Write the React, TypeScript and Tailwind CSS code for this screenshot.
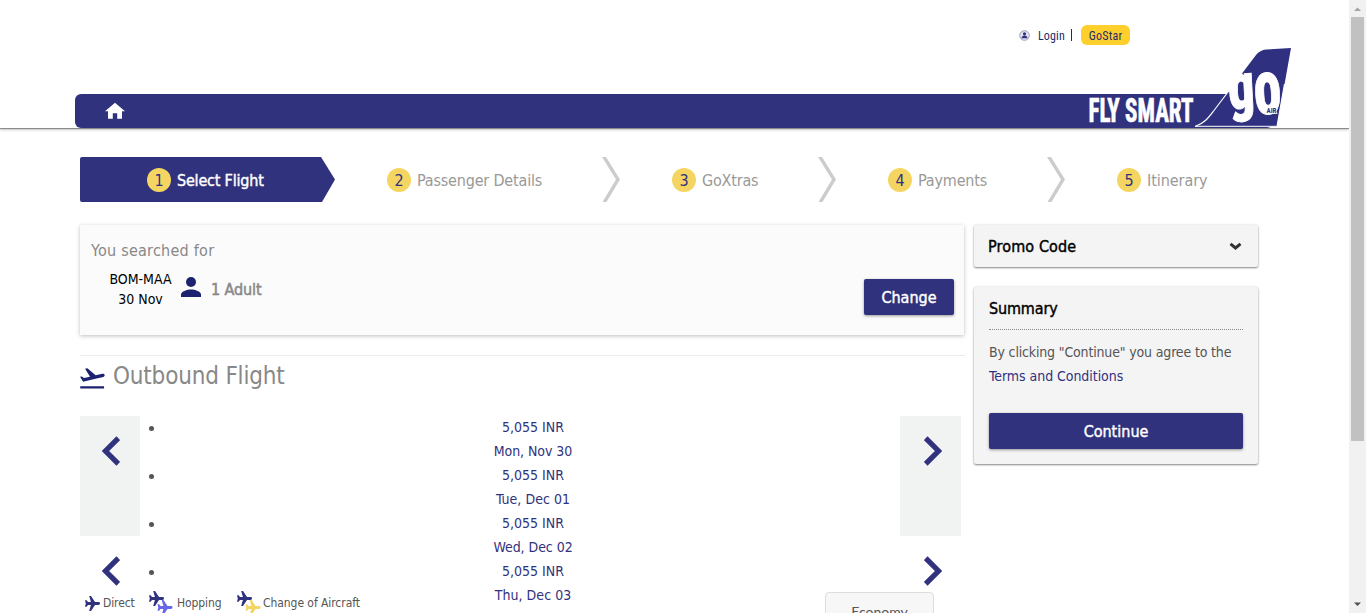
import React from "react";

const steps = [
  { label: "Passenger Details", width: "w-[285px]", track: "-tracking-[0.18px]" },
  { label: "GoXtras", width: "w-[216px]", track: "-tracking-[0.2px]" },
  { label: "Payments", width: "w-[229px]", track: "-tracking-[0.17px]" },
  { label: "Itinerary", width: "w-[150px]", track: "-tracking-[0.05px]" },
];

const fares = ["Mon, Nov 30", "Tue, Dec 01", "Wed, Dec 02", "Thu, Dec 03"];

const PLANE =
  "M15 7.500c0-.9-.7-1.400-1.500-1.400H10L6 0H4.200l1.700 6.100H3L1.600 4.200H0l.8 3.300L0 10.800h1.600L3 8.900h2.900L4.200 15H6l4-6.100h3.500c.8 0 1.500-.5 1.500-1.400z";

function Circle({ n }: { n: number }) {
  return (
    <span className="flex h-6 w-6 shrink-0 items-center justify-center rounded-full bg-[#f5d562] pt-0.5 text-[16px] leading-none text-[#31327d]">
      {n}
    </span>
  );
}

function Stepper() {
  return (
    <div className="flex h-[45px] w-[1178px]">
      <div className="flex w-[255px] items-center rounded-l-[2px] bg-[#31327d] pl-[67px] text-white [clip-path:polygon(0_0,241px_0,100%_50%,242px_100%,0_100%)]">
        <Circle n={1} />
        <span className="ml-1.5 pt-0.5 text-[16px] -tracking-[0.2px] [-webkit-text-stroke:0.4px_white]">Select Flight</span>
      </div>
      {steps.map((s, i) => (
        <div key={s.label} className={`flex shrink-0 items-center pl-[52px] ${s.width}`}>
          <Circle n={i + 2} />
          <span className={`ml-1.5 pt-0.5 text-[16px] text-[#999] ${s.track}`}>{s.label}</span>
          {i < 3 && (
            <svg className="ml-auto" width="18" height="45" viewBox="0 0 18 45">
              <path d="M0 0H4L18 22.5L4.500 45H.5L14 22.500z" fill="#ccc" />
            </svg>
          )}
        </div>
      ))}
    </div>
  );
}

function Logo() {
  return (
    <svg className="block" width="210" height="82" viewBox="1085 47 210 82">
      <g fontFamily="Roboto, 'Liberation Sans Narrow', sans-serif" fontWeight="700" style={{ fontStretch: "75%" }}>
        <text
          x="1088.500"
          y="122"
          fontSize="33"
          fill="#fff"
          stroke="#fff"
          strokeWidth=".7"
          textLength="105"
          lengthAdjust="spacingAndGlyphs"
        >
          FLY SMART
        </text>
        <path d="M1195 126.500C1205 123 1209 117 1214 110.500L1256 55Q1260 50 1266 49.500L1291 48L1277 126.500z" fill="#2f307f" />
        <path d="M1195 126.500C1205 123 1209 117 1214 110.500L1242 73.500M1284.500 84L1277 126.500" fill="none" stroke="#fff" strokeWidth="1.200" />
        <path d="M1195 126.300H1277" stroke="#fff" strokeWidth="1" />
        <g fill="#fff" stroke="#fff" strokeWidth="1" fontWeight="800">
          <text fontSize="64" transform="translate(1229 109) rotate(-3) scale(.82 1.020)">g</text>
          <text fontSize="80" transform="translate(1255 114.500) rotate(-3) scale(.69 .96)">o</text>
        </g>
        <text x="1266.500" y="112.500" fontSize="7" fill="#2f307f" stroke="#fff" strokeWidth="1.500" paintOrder="stroke" textLength="10" lengthAdjust="spacingAndGlyphs">
          AIR
        </text>
      </g>
    </svg>
  );
}

function Header() {
  return (
    <header className="relative h-32 w-[1349px] bg-white shadow-[0_1px_1px_rgba(0,0,0,0.36),0_2px_3px_rgba(0,0,0,0.18)]">
      <div className="flex h-[94px] items-start pl-[1019px] pt-[25px] font-['Roboto','Liberation_Sans_Narrow',sans-serif] text-[12px] text-[#1d2c6b] [font-stretch:75%]">
        <div className="flex h-5 items-center">
          <svg width="11" height="11" viewBox="0 0 11 11">
            <circle cx="5.500" cy="5.500" r="4.800" fill="#e4e4f2" stroke="#9899c4" />
            <circle cx="5.500" cy="3.800" r="1.600" fill="#31327d" />
            <path d="M2.500 8.200Q2.800 5.600 5.500 5.600T8.500 8.200z" fill="#31327d" />
          </svg>
          <span className="ml-[8px] w-[27px] whitespace-nowrap pt-px tracking-[0.15px]">Login</span>
          <span className="ml-[6px] h-[12px] w-px bg-[#1d2c6b]" />
          <span className="ml-[9px] flex h-5 w-[49px] items-center justify-center rounded-[6px] bg-[#ffcf2e] pt-px tracking-[0.2px]">
            GoStar
          </span>
        </div>
      </div>
      <div className="ml-[75px] flex h-[34px] w-[1198px] items-center rounded-[6px] bg-[#31327d] pl-[28px]">
        <svg className="block" width="24" height="22" viewBox="0 0 24 24" preserveAspectRatio="none" fill="#fff">
          <path d="M9.800 20.500v-6h4.400v6H19v-8.300h3L12 3 2 12.200h3v8.300z" />
        </svg>
      </div>
      <div className="absolute left-[1085px] top-[47px]">
        <Logo />
      </div>
    </header>
  );
}

function Chevron({ flip }: { flip?: boolean }) {
  return (
    <svg className={flip ? "-scale-x-100" : ""} width="18" height="30" viewBox="0 0 18 30">
      <path d="M16.300 2.200L3.500 15L16.300 27.800" fill="none" stroke="#31327d" strokeWidth="5.200" />
    </svg>
  );
}

function Arrows({ flip }: { flip?: boolean }) {
  return (
    <div className={flip ? "w-[61px]" : "w-[60px]"}>
      <div className={`h-[120px] bg-[#f1f3f3] pt-5 ${flip ? "pl-6" : "pl-[22px]"}`}>
        <Chevron flip={flip} />
      </div>
      <div className={`pt-5 ${flip ? "pl-6" : "pl-[22px]"}`}>
        <Chevron flip={flip} />
      </div>
    </div>
  );
}

function TwoPlanes({ second }: { second: string }) {
  return (
    <svg width="24" height="23" viewBox="0 0 24 23">
      <path d={PLANE} fill="#31327d" />
      <path d={PLANE} fill={second} transform="translate(8.500 9)" />
    </svg>
  );
}

function FlightList() {
  return (
    <section className="mt-[25px] flex h-[197px] w-[885px] overflow-hidden">
      <div className="flex w-[60px] shrink-0 flex-col">
        <Arrows />
      </div>
      <ul className="-mt-px w-[760px] pl-[9px] text-center text-[14px] leading-6 text-[#31327d]">
        {fares.map((d, i) => (
          <li key={d} className="flex items-start">
            <span className="mt-[11px] h-[5px] w-[5px] rounded-full bg-[#555]" />
            <div className="flex-1 pl-3">
              <p>5,055 INR</p>
              <p className={i % 2 ? "tracking-[0.05px]" : "-tracking-[0.05px]"}>{d}</p>
            </div>
          </li>
        ))}
      </ul>
      <Arrows flip />
    </section>
  );
}

function Legend() {
  return (
    <div className="absolute left-[85px] top-[590px] flex h-[25px] items-center text-[12px] text-[#555]">
      <svg className="mt-[2px]" width="15" height="15" viewBox="0 0 15 15">
        <path d={PLANE} fill="#31327d" />
      </svg>
      <span className="ml-[3px] w-[46px] -tracking-[0.1px]">Direct</span>
      <TwoPlanes second="#6668e8" />
      <span className="ml-[4px] w-[60px] -tracking-[0.1px]">Hopping</span>
      <TwoPlanes second="#f5d562" />
      <span className="ml-[2px] whitespace-nowrap -tracking-[0.06px]">Change of Aircraft</span>
    </div>
  );
}

function Sidebar() {
  const card = "rounded-[2px] bg-[#f4f4f4] shadow-[0_1px_2px_rgba(0,0,0,0.45),0_0_3px_rgba(0,0,0,0.1)]";
  return (
    <aside className="ml-[9px] w-[284px]">
      <div className={`flex h-[42px] items-center pl-[14px] pr-[16px] ${card}`}>
        <span className="pt-0.5 text-[16px] tracking-[0.12px] text-black [-webkit-text-stroke:0.4px_black]">Promo Code</span>
        <svg className="ml-auto" width="13" height="9" viewBox="0 0 13 9">
          <path d="M1.500 1.800L6.500 6L11.500 1.800" fill="none" stroke="#333" strokeWidth="3" />
        </svg>
      </div>
      <div className={`mt-5 h-[177px] px-[15px] ${card}`}>
        <h2 className="h-[43px] border-b border-dotted border-[#888] pt-[10px] text-[16px] leading-6 text-black -tracking-[0.15px] [-webkit-text-stroke:0.4px_black]">
          Summary
        </h2>
        <p className="whitespace-nowrap pt-[10px] text-[14px] leading-6 -tracking-[0.16px] text-[#555]">
          By clicking "Continue" you agree to the
        </p>
        <p className="text-[14px] leading-6 -tracking-[0.05px] text-[#31327d]">Terms and Conditions</p>
        <button className="mt-[25px] block h-9 w-full rounded-[2px] bg-[#31327d] pt-0.5 text-[16px] text-white shadow-[0_1px_3px_rgba(0,0,0,0.4)] [-webkit-text-stroke:0.4px_white]">
          Continue
        </button>
      </div>
    </aside>
  );
}

function Scrollbar() {
  return (
    <div className="flex w-[17px] shrink-0 flex-col items-center bg-[#f1f1f1]">
      <svg className="shrink-0" width="17" height="17" viewBox="0 0 17 17">
        <path d="M5 11L8.500 7.500L12 11z" fill="#a3a3a3" />
      </svg>
      <div className="h-[424px] w-[13px] shrink-0 bg-[#c1c1c1]" />
      <svg className="mt-auto shrink-0" width="17" height="17" viewBox="0 0 17 17">
        <path d="M5 6.500L8.500 10L12 6.500z" fill="#505050" />
      </svg>
    </div>
  );
}

export default function App() {
  return (
    <div className="relative flex h-[613px] w-[1366px] overflow-hidden bg-white font-['DejaVu_Sans_Condensed','DejaVu_Sans',sans-serif]">
      <div className="w-[1349px] shrink-0 overflow-hidden">
        <Header />
        <main className="pl-20 pt-[29px]">
          <Stepper />
          <div className="mt-[23px] flex">
            <div className="w-[885px]">
              <section className="flex h-[110px] w-[884px] justify-between bg-[#fbfbfb] pl-[11px] pr-[10px] shadow-[0_1px_4px_rgba(0,0,0,0.26)]">
                <div>
                  <h2 className="pt-[14px] text-[16px] leading-6 tracking-[0.25px] text-[#888]">You searched for</h2>
                  <div className="mt-[6px] flex pl-[18px]">
                    <div className="w-[63px] whitespace-nowrap text-center text-[14px] leading-5 text-black">
                      <p>BOM-MAA</p>
                      <p>30 Nov</p>
                    </div>
                    <svg className="ml-[9px] mt-[8px] block" width="20" height="20" viewBox="0 0 20 20" fill="#1c2170">
                      <circle cx="10" cy="5" r="5" />
                      <path d="M0 20V17.500C0 14.500 6 12.500 10 12.500S20 14.500 20 17.500V20z" />
                    </svg>
                    <span className="ml-[10px] mt-[9px] text-[16px] leading-6 -tracking-[0.1px] text-[#888] [-webkit-text-stroke:0.5px_#888]">1 Adult</span>
                  </div>
                </div>
                <button className="mt-[54px] h-9 w-[90px] rounded-[2px] bg-[#31327d] pt-0.5 text-[16px] text-white shadow-[0_1px_3px_rgba(0,0,0,0.4)] [-webkit-text-stroke:0.4px_white]">
                  Change
                </button>
              </section>
              <div className="mt-5 flex h-9 items-start border-t border-[#ececec]">
                <svg className="mt-[11px] block" width="25" height="22" viewBox="1.800 3 21 20" preserveAspectRatio="none" fill="#1c2170">
                  <path d="M2 20.500h20v2H2zM22.500 10.140c-.21-.8-1.040-1.280-1.840-1.060L14.920 10.500 8.020 4.070l-1.930.510 4.140 7.170-4.970 1.330-1.970-1.540-1.450.390 1.820 3.160.77 1.330 1.600-.43 5.310-1.420 4.350-1.160L21.430 11.990c.81-.23 1.280-1.050 1.070-1.850z" />
                </svg>
                <h1 className="ml-[8px] pt-[2px] text-[24px] leading-9 -tracking-[0.18px] text-[#888]">Outbound Flight</h1>
              </div>
              <FlightList />
            </div>
            <Sidebar />
          </div>
        </main>
      </div>
      <Scrollbar />
      <Legend />
      <div className="absolute left-[825px] top-[592px] h-10 w-[109px] rounded-[4px] border border-[#ddd] bg-[#f7f7f7] pt-[9px] text-center font-['Lato',sans-serif] text-[14px] leading-5 text-[#555]">
        Economy
      </div>
    </div>
  );
}
